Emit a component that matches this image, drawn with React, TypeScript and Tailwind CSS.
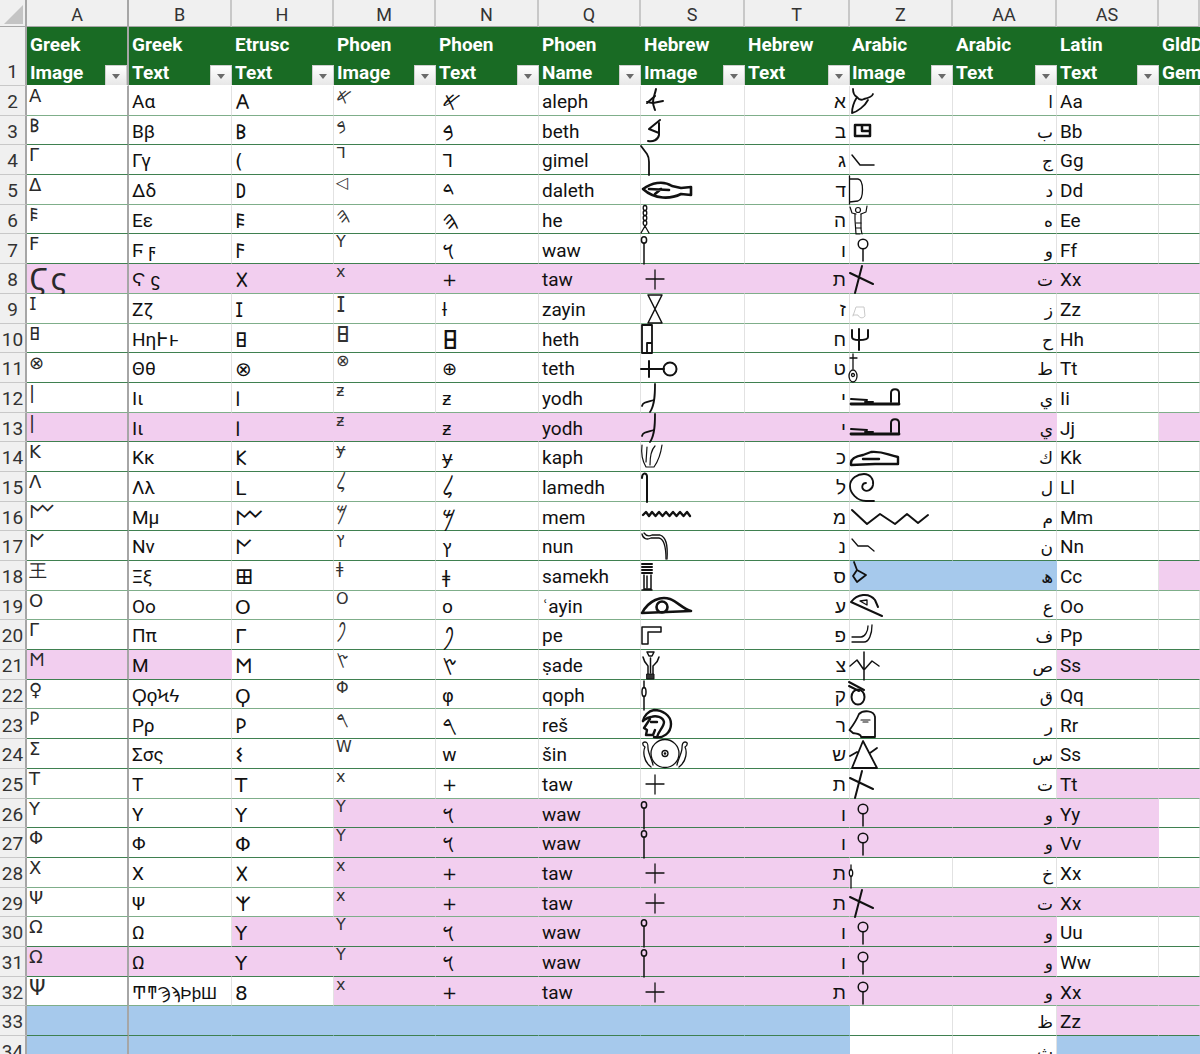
import type { ReactNode } from "react";

const COLS = ["A", "B", "H", "M", "N", "Q", "S", "T", "Z", "AA", "AS", ""];
const HEAD: [string, string][] = [
  ["Greek", "Image"], ["Greek", "Text"], ["Etrusc", "Text"], ["Phoen", "Image"], ["Phoen", "Text"], ["Phoen", "Name"],
  ["Hebrew", "Image"], ["Hebrew", "Text"], ["Arabic", "Image"], ["Arabic", "Text"], ["Latin", "Text"], ["GldD", "Gem"],
];

const zig = "M2 13 L5 10 L8 14 L11 10 L14.500 14 L18 10 L21.500 14 L25 10 L28.500 14 L32 10 L35.500 14 L39 10 L42.500 14 L46 10 L49 14";

const PICS: Record<string, ReactNode> = {
  sAleph: <g strokeWidth="2"><path d="M15 3 C14 8 12 12 12 16 C12 19 13 21 14 24" /><path d="M6 17 L14 10 M6 16 L12 17 L22 15" /></g>,
  sBeth: <g strokeWidth="2"><path d="M19 4 L8 13 L18 17" /><path d="M18 7 V19 C17 24 12 26 7 25" /></g>,
  sGimel: <path strokeWidth="1.800" d="M0 1 L6 9 Q8 12 8 17 L8 30" />,
  sFish: <g strokeWidth="2.600"><path d="M2 14 C10 8 22 5 31 11 L40 13 L50 12 L50 20 L40 19 C30 24 14 25 2 14 Z" /><path d="M8 14 L28 15 M14 19 L20 14" /></g>,
  sRope: <g strokeWidth="1.300"><ellipse cx="4" cy="3" rx="1.800" ry="2.500" /><ellipse cx="4" cy="8" rx="1.800" ry="2.500" /><ellipse cx="4" cy="13" rx="1.800" ry="2.500" /><ellipse cx="4" cy="18" rx="1.800" ry="2.500" /><path d="M4 21 L0 28 M4 21 L8 28" /></g>,
  sWaw: <g strokeWidth="1.500"><ellipse cx="3" cy="6" rx="2.600" ry="3.200" /><path d="M3 9 V30" /></g>,
  sPlus: <path strokeWidth="1.300" d="M5 15 H23 M14 6 V25" />,
  sGlass: <path strokeWidth="1.500" d="M7 1 H21 L7 29 H21 Z" />,
  sHeth: <path strokeWidth="1.800" d="M1 1 H11 V29 H1 Z M6 29 V19 H11" />,
  sTeth: <g strokeWidth="2"><path d="M0 16 H23 M8 8 V24" /><circle cx="29" cy="16" r="6.500" /></g>,
  sYod: <g strokeWidth="1.800"><path d="M14 1 C14 10 14 22 9 29" /><path d="M1 23 C2 19 6 19 13 17" /></g>,
  sKaph: <g strokeWidth="1.200"><path d="M1 3 C0 11 2 20 5 25 L13 25 C18 18 20 10 21 3" /><path d="M6 5 L5 20 M14 4 C10 8 9 15 9 23" /></g>,
  sLamedh: <path strokeWidth="2" d="M1 6 C1 1 5 0 6 4 L6 30" />,
  sMem: <path strokeWidth="2.400" d={zig} />,
  sNun: <g strokeWidth="1.300"><path d="M1 3 C2 8 6 9 10 7 L18 7 C23 8 25 14 25 28" /><path d="M3 2 C6 6 9 5 11 4 L19 4 C25 6 27 13 26 28" /></g>,
  sDjed: <g strokeWidth="1.500"><path strokeWidth="2" d="M1 3 H11 M1 6 H11 M1 9 H11 M1 12 H11" /><path d="M3 14 V28 H10 V14 M1 29 H11" /><path d="M6 15 V27" /></g>,
  sEye: <g strokeWidth="2.600"><path d="M1 22 C8 9 20 5 29 8 C37 11 42 18 50 20 L1 22 Z" /><circle cx="21" cy="16" r="5.500" /></g>,
  sPe: <path strokeWidth="1.500" d="M1 24 V7 H20 V12 H7 V24 Z" />,
  sLily: <g strokeWidth="1.500"><path d="M6 2 H13 L11 6 H8 Z" /><path d="M2 7 C3 12 5 14 7 16 V24 M18 7 C17 12 14 14 12 16 V24" /><path d="M9.500 8 V23" /><path strokeWidth="1" d="M6 24 H13 V29 H6 Z" fill="#333" /></g>,
  sQoph: <g strokeWidth="1.500"><path d="M3 1 V8 M3 16 V30" /><ellipse cx="3" cy="12" rx="2" ry="4.500" /></g>,
  sHead: <g strokeWidth="2.400"><path d="M13 28 C22 30 30 24 30 15 C30 6 21 1 13 1 C7 2 3 7 2 12" /><path d="M2 12 C5 10 5 9 10 8 C15 6 22 8 23 13 C23 18 18 21 16 28" /><path d="M9 10 L3 19 L6 21 L5 26 H12 L14 21" /><path d="M10 13 H16" /></g>,
  sDisk: <g strokeWidth="1.300"><circle cx="24" cy="14.500" r="14" /><circle cx="24" cy="14.500" r="3" /><circle cx="24" cy="14.500" r="0.700" /><path d="M10 28 C2 22 2 12 4 8 C1 6 1 3 4 3 C7 3 7 6 7 9 C7 14 11 20 12 26" /><path d="M38 28 C46 22 46 12 44 8 C47 6 47 3 44 3 C41 3 41 6 41 9 C41 14 37 20 36 26" /></g>,
  zAleph: <path strokeWidth="1.800" d="M4 3 C4 7 6 10 8 11 C10 14 13 14 15 13 C20 12 23 11 24 8 M8 11 C5 16 3 21 3 27 C8 26 16 20 19 14" />,
  zBeth: <path strokeWidth="2.500" d="M6 9 V20 H21 V9 H6 M13 9 V15 H21" />,
  zGimel: <path strokeWidth="1.500" d="M3 10 L11 20 H25" />,
  zDaleth: <path strokeWidth="1.300" d="M0.500 1 V29 M0.500 4 H9 C15 5 15 24 9 26 L0.500 27" />,
  zMan: <g strokeWidth="1.200"><path d="M1 2 L3 8 L7 9 M18 1 L17 7 L12 9" /><circle cx="9" cy="5" r="2.500" /><path d="M6 9 L6 15 L7 29 H11 M12 9 V15 L12 24 L13 29" /><path d="M7 18 H12 M7 23 H12" /></g>,
  zWaw: <g strokeWidth="1.500"><circle cx="14" cy="10" r="4.800" /><path d="M14 15 V27" /></g>,
  zTaw: <g strokeWidth="2"><path d="M13 2 L6 29 M1 9 L24 20" /></g>,
  zZayin: <path stroke="#c9c9c9" strokeWidth="1" d="M4 22 L7 13 H15 L16 22 C14 25 10 24 9 21 H4" />,
  zTrident: <path strokeWidth="2" d="M10 5 V26 M3 6 V13 C3 15 5 16 10 16 C15 16 19 15 19 13 V6" />,
  zMummy: <g strokeWidth="1.300"><path d="M4 1 V16 M1 5 H8" /><ellipse cx="4" cy="23" rx="4" ry="6" /><circle cx="4" cy="22" r="1.500" /></g>,
  zYod: <g strokeWidth="2"><path strokeWidth="2.800" d="M2 21 H50" /><path d="M2 16 L18 17 M50 21 V10 C50 5 42 5 42 10 V19 M16 19 L24 19" /></g>,
  zHand: <g strokeWidth="2.400"><path d="M2 21 C2 16 8 14 14 13 L22 10 C35 9 38 13 49 15 V22 H26 L2 23 Z" /><path d="M14 17 H30" /></g>,
  zSpiral: <path strokeWidth="1.800" d="M25 29 H17 C8 29 1 21 1 14 C1 6 9 2 15 2 C21 2 25 7 24 13 C23 18 18 20 15 18 C12 16 13 11 17 11" />,
  zWave: <path strokeWidth="2" d="M3 8 L18 22 L31 12 L46 22 L58 12 L69 21 L79 13" />,
  zNun: <path strokeWidth="1.300" d="M3 8 L9 15 H19 L25 20" />,
  zRhomb: <path strokeWidth="1.800" d="M5 1 L8 9 L17 14 L8 21 L4 15 L8 9" />,
  zEye: <g strokeWidth="2"><path d="M2 11 C8 3 20 1 26 9 L29 16 M2 11 L33 25" /><path strokeWidth="1.300" d="M11 10 L18 9 L18 14 Z" /></g>,
  zPe: <path strokeWidth="1.300" d="M3 17 H12 C16 17 19 11 19 6 M3 22 H15 C20 22 23 14 23 5" />,
  zPlant: <path strokeWidth="1.500" d="M15 2 V30 M1 16 L8 10 L15 20 L23 11 L30 16" />,
  zKnot: <g strokeWidth="2"><path d="M0 2 L15 10 M0 6 L10 11" /><ellipse cx="9" cy="17" rx="6.500" ry="7.500" /></g>,
  zHead: <g strokeWidth="1.800"><path d="M10 5 C14 1 25 1 26 8 V28 H12 C12 25 9 25 4 24 L0.500 21 C5 15 8 10 10 5 Z" /><path strokeWidth="1.200" d="M12 11 H21 M14 13 H19" /></g>,
  zTri: <path strokeWidth="1.800" d="M14 2 L3 29 H28 Z M1 17 L8 13 M21 14 L28 9" />,
  zRope: <g strokeWidth="1.300"><path d="M2 7 V12 M2 18 V30" /><ellipse cx="2" cy="15" rx="1.700" ry="3.500" /></g>,
};

type Row = [string, string, string, string, string, string, string, string, string, string, string, string];
// fill, A, B, H, M, N, Q, S pic, T, Z pic, AA, AS
const ROWS: Row[] = [
  ["............", "Α", "Αα", "𐌀", "𐤀", "𐤀", "aleph", "sAleph", "א", "zAleph", "ا", "Aa"],
  ["............", "𐌁", "Ββ", "𐌁", "𐤁", "𐤁", "beth", "sBeth", "ב", "zBeth", "ب", "Bb"],
  ["............", "Γ", "Γγ", "(", "ᒣ", "ᒣ", "gimel", "sGimel", "ג", "zGimel", "ج", "Gg"],
  ["............", "Δ", "Δδ", "𐌃", "◁", "𐤃", "daleth", "sFish", "ד", "zDaleth", "د", "Dd"],
  ["............", "𐌄", "Εε", "𐌄", "𐤄", "𐤄", "he", "sRope", "ה", "zMan", "ه", "Ee"],
  ["............", "Ϝ", "Ϝ ϝ", "𐌅", "Y", "𐤅", "waw", "sWaw", "ו", "zWaw", "و", "Ff"],
  ["pppppppppppp", "Ϛς", "Ϛ ϛ", "𐌗", "x", "+", "taw", "sPlus", "ת", "zTaw", "ت", "Xx"],
  ["............", "𐌆", "Ζζ", "𐌆", "𐌆", "ƚ", "zayin", "sGlass", "ז", "zZayin", "ز", "Zz"],
  ["............", "𐌇", "ΗηͰͱ", "𐌇", "𐌇", "𐌇", "heth", "sHeth", "ח", "zTrident", "ح", "Hh"],
  ["............", "⊗", "Θθ", "⊗", "⊗", "⊕", "teth", "sTeth", "ט", "zMummy", "ط", "Tt"],
  ["............", "|", "Ιι", "𐌉", "ƶ", "ƶ", "yodh", "sYod", "י", "zYod", "ي", "Ii"],
  ["pppppppppp.p", "|", "Ιι", "𐌉", "ƶ", "ƶ", "yodh", "sYod", "י", "zYod", "ي", "Jj"],
  ["............", "Κ", "Κκ", "𐌊", "ɏ", "ɏ", "kaph", "sKaph", "כ", "zHand", "ك", "Kk"],
  ["............", "Λ", "Λλ", "L", "𐤋", "𐤋", "lamedh", "sLamedh", "ל", "zSpiral", "ل", "Ll"],
  ["............", "𐌌", "Μμ", "𐌌", "𐤌", "𐤌", "mem", "sMem", "מ", "zWave", "م", "Mm"],
  ["............", "𐌍", "Νν", "𐌍", "ץ", "ץ", "nun", "sNun", "נ", "zNun", "ن", "Nn"],
  ["........bb.p", "王", "Ξξ", "𐌎", "ǂ", "ǂ", "samekh", "sDjed", "ס", "zRhomb", "ھ", "Cc"],
  ["............", "Ο", "Οο", "Ο", "O", "o", "ʿayin", "sEye", "ע", "zEye", "ع", "Oo"],
  ["............", "Γ", "Ππ", "Γ", "𐤐", "𐤐", "pe", "sPe", "פ", "zPe", "ف", "Pp"],
  ["pp........pp", "𐌑", "Μ", "𐌑", "𐤑", "𐤑", "ṣade", "sLily", "צ", "zPlant", "ص", "Ss"],
  ["............", "♀", "ϘϙϞϟ", "Ϙ", "Φ", "φ", "qoph", "sQoph", "ק", "zKnot", "ق", "Qq"],
  ["............", "𐌓", "Ρρ", "𐌓", "𐤓", "𐤓", "reš", "sHead", "ר", "zHead", "ر", "Rr"],
  ["............", "Σ", "Σσς", "𐌔", "W", "w", "šin", "sDisk", "ש", "zTri", "س", "Ss"],
  ["..........pp", "Τ", "Τ", "Τ", "x", "+", "taw", "sPlus", "ת", "zTaw", "ت", "Tt"],
  ["...pppppppp.", "Υ", "Υ", "Υ", "Y", "𐤅", "waw", "sWaw", "ו", "zWaw", "و", "Yy"],
  ["...pppppppp.", "Φ", "Φ", "Φ", "Y", "𐤅", "waw", "sWaw", "ו", "zWaw", "و", "Vv"],
  ["...ppppp....", "Χ", "Χ", "𐌗", "x", "+", "taw", "sPlus", "ת", "zRope", "خ", "Xx"],
  ["...ppppppppp", "Ψ", "Ψ", "𐌙", "x", "+", "taw", "sPlus", "ת", "zTaw", "ت", "Xx"],
  ["..pppppppp..", "Ω", "Ω", "Υ", "Y", "𐤅", "waw", "sWaw", "ו", "zWaw", "و", "Uu"],
  ["pppppppppp..", "Ω", "Ω", "Υ", "Y", "𐤅", "waw", "sWaw", "ו", "zWaw", "و", "Ww"],
  ["...ppppppppp", "Ψ", "ͲͳϠϡϷϸШ", "8", "x", "+", "taw", "sPlus", "ת", "zWaw", "و", "Xx"],
  ["bbbbbbbb..pp", "", "", "", "", "", "", "", "", "", "ظ", "Zz"],
  ["bbbbbbbb..bb", "", "", "", "", "", "", "", "", "", "ث", ""],
];

const FILL: Record<string, string> = {
  ".": "bg-white border-r-[#e2e2e2]",
  p: "bg-[#f2ceef] border-r-[#f2ceef]",
  b: "bg-[#a6c9ec] border-r-[#a6c9ec]",
};

const isAstral = (t: string) => (t.codePointAt(0) ?? 0) > 0xffff;

function Pic({ name, shift }: { name: string; shift: boolean }) {
  if (!name) return null;
  return (
    <svg viewBox="0 0 104 30" fill="none" stroke="#111" strokeLinecap="round" strokeLinejoin="round" className={`absolute top-0 z-10 h-[30px] w-[104px] overflow-visible ${shift ? "-left-[1px]" : "left-0"}`}>
      {PICS[name]}
    </svg>
  );
}

function FilterButton() {
  return (
    <span className="flex h-[22px] w-[22px] shrink-0 items-center justify-center border border-[#cfcfcf] bg-gradient-to-b from-white to-[#e6e6e6]">
      <svg viewBox="0 0 8 5" className="h-[5px] w-[8px]"><path d="M0 0 H8 L4 5 Z" fill="#6a6a6a" /></svg>
    </span>
  );
}

function Cell({ fill, line, col, row, text }: { fill: string; line: string; col: number; row: number; text: string }) {
  const base = `relative min-w-0 border-b border-r ${line} ${FILL[fill]}`;
  if (col === 0) {
    return (
      <div className={`${base} flex items-start overflow-visible whitespace-nowrap border-r-2 !border-r-[#a6a6a6] pl-[2px] font-['DejaVu_Sans',sans-serif] leading-none text-[#2a2a2a] ${row === 8 ? "text-[30px] tracking-[2px]" : row === 32 ? "text-[21px]" : "text-[18px]"}`}>
        <span className="mt-[1px]">{text}</span>
      </div>
    );
  }
  if (col === 3) {
    return (
      <div className={`${base} flex items-start pl-[2px] font-['DejaVu_Sans',sans-serif] leading-none text-[#333] ${isAstral(text) ? "text-[22px]" : "text-[16px]"}`}>
        <span>{text}</span>
      </div>
    );
  }
  if (col === 6 || col === 8) {
    return <div className={base}><Pic name={text} shift={col === 8} /></div>;
  }
  if (col === 7 || col === 9) {
    return (
      <div className={`${base} flex items-end justify-end pb-[0.6px] pr-[3px] leading-[24px]`}>
        <span className={col === 7 ? "text-[19px]" : "font-['DejaVu_Sans',sans-serif] text-[17px]"}>{text}</span>
      </div>
    );
  }
  const size =
    col === 4
      ? `pl-[6px] font-['DejaVu_Sans',sans-serif] ${isAstral(text) ? "text-[26px]" : "text-[18px]"}`
      : col === 2
        ? "font-['DejaVu_Sans',sans-serif] text-[20px]"
        : col === 1 && text.length > 5
          ? "pl-[3px] text-[17px]"
          : "pl-[3px]";
  return (
    <div className={`${base} flex items-end overflow-visible whitespace-nowrap pb-[0.6px] leading-[24px] ${col === 2 ? "pl-[3px]" : ""} ${size}`}>
      <span>{text}</span>
    </div>
  );
}

export default function App() {
  return (
    <div className="grid h-[1054px] w-[1200px] grid-cols-[27px_102px_103px_102px_102px_103px_102px_104px_105px_103px_104px_102px_41px] grid-rows-[27px_59px_repeat(33,29.7px)] overflow-hidden bg-white font-['Roboto','Liberation_Sans','DejaVu_Sans',sans-serif] text-[19px] text-[#111]">
      <div className="flex items-end justify-end border-b border-r-2 border-[#a6a6a6] bg-[#f0f0f0] p-[2px]">
        <svg viewBox="0 0 18 18" className="h-[19px] w-[19px]"><path d="M18 0 V18 H0 Z" fill="#c4c4c4" /></svg>
      </div>
      {COLS.map((c, i) => (
        <div key={c + i} className={`flex items-center justify-center border-b border-[#a6a6a6] bg-[#f0f0f0] pt-[3px] text-[18px] leading-none text-[#333] ${i === 0 ? "border-r-2" : "border-r-2 !border-r-[#c8c8c8]"}`}>
          {c}
        </div>
      ))}

      <div className="flex items-end justify-center border-b border-r-2 border-b-[#c8c8c8] border-r-[#a6a6a6] bg-[#f0f0f0] leading-[26px] text-[#333]">1</div>
      {HEAD.map(([a, b], i) => (
        <div key={i} className={`flex min-w-0 flex-col overflow-hidden whitespace-nowrap border-b border-b-white bg-[#196b24] pt-[4px] font-bold leading-[28px] text-white ${i === 0 ? "border-r-2 border-r-[#a6a6a6]" : ""} ${i === 8 ? "pl-[2px]" : "pl-[3px]"}`}>
          <span>{a}</span>
          <span className="flex items-end justify-between">
            <span>{b}</span>
            {i < 11 && <FilterButton />}
          </span>
        </div>
      ))}

      {ROWS.map((r, ri) => {
        const n = ri + 2;
        const pos = 86 + (ri + 1) * 29.7;
        const light = pos - Math.floor(pos) > 0.6;
        const line = light ? "border-b-[#7fae8a]" : "border-b-[#3f8050]";
        const cells = [r[1], r[2], r[3], r[4], r[5], r[6], r[7], r[8], r[9], r[10], r[11], ""];
        return [
          <div key={`h${n}`} className="flex items-end justify-center border-b border-r-2 border-b-[#c8c8c8] border-r-[#a6a6a6] bg-[#f0f0f0] pb-[0.6px] leading-[24px] text-[#333]">{n}</div>,
          ...cells.map((t, ci) => <Cell key={`${n}-${ci}`} fill={r[0][ci]} line={line} col={ci} row={n} text={t} />),
        ];
      })}
    </div>
  );
}
